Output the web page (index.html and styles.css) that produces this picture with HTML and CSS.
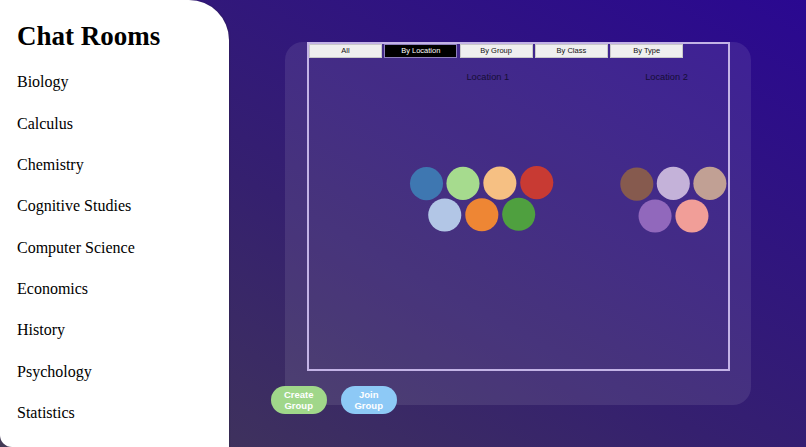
FILE: index.html
```html
<!DOCTYPE html>
<html lang="en">
<head>
<meta charset="utf-8">
<title>Chat Rooms</title>
<link rel="stylesheet" href="styles.css">
</head>
<body>
<div class="app">
  <aside class="sidebar">
    <h1 class="title">Chat Rooms</h1>
    <ul class="rooms">
      <li>Biology</li>
      <li>Calculus</li>
      <li>Chemistry</li>
      <li>Cognitive Studies</li>
      <li>Computer Science</li>
      <li>Economics</li>
      <li>History</li>
      <li>Psychology</li>
      <li>Statistics</li>
    </ul>
  </aside>
  <main class="main">
    <section class="panel">
      <div class="board">
        <div class="tabs">
          <button class="tab">All</button>
          <button class="tab active">By Location</button>
          <button class="tab">By Group</button>
          <button class="tab">By Class</button>
          <button class="tab">By Type</button>
        </div>
        <svg class="chart" width="420" height="312" viewBox="0 0 420 312">
          <text class="loc" x="178.7" y="22.5" text-anchor="middle">Location 1</text>
          <text class="loc" x="358" y="22.5" text-anchor="middle">Location 2</text>
          <g>
            <circle cx="117.2" cy="126" r="16.6" fill="#3e77b1"/>
            <circle cx="153.8" cy="125.8" r="16.6" fill="#a6db8e"/>
            <circle cx="190.8" cy="125.5" r="16.6" fill="#f6c083"/>
            <circle cx="227.8" cy="125" r="16.6" fill="#c83a33"/>
            <circle cx="135.5" cy="157.5" r="16.6" fill="#b2c6e6"/>
            <circle cx="172.7" cy="157.3" r="16.6" fill="#ee8634"/>
            <circle cx="209.7" cy="156.8" r="16.6" fill="#4fa03f"/>
          </g>
          <g>
            <circle cx="328.2" cy="126.5" r="16.6" fill="#865a4e"/>
            <circle cx="364.8" cy="125.8" r="16.6" fill="#c4b2d9"/>
            <circle cx="401.5" cy="125.8" r="16.6" fill="#c1a094"/>
            <circle cx="346.5" cy="158.5" r="16.6" fill="#9168bc"/>
            <circle cx="383.5" cy="158.5" r="16.6" fill="#f19e98"/>
          </g>
        </svg>
      </div>
      <div class="actions">
        <button class="pill create">Create<br>Group</button>
        <button class="pill join">Join<br>Group</button>
      </div>
    </section>
  </main>
</div>
</body>
</html>
```
FILE: styles.css
```css
html, body {
  margin: 0;
  padding: 0;
  height: 100%;
}
body {
  background: linear-gradient(to bottom left, #2a0891 0%, #35206f 55%, #433a55 100%);
  overflow: hidden;
}
.app {
  display: flex;
  height: 447px;
}
.sidebar {
  width: 229px;
  flex: none;
  height: 447px;
  box-sizing: border-box;
  background: #fff;
  border-radius: 0 40px 0 12px;
  padding: 20px 0 0 17px;
  box-shadow: 1px 0 1px rgba(40, 30, 60, 0.35);
  font-family: "Liberation Serif", "Times New Roman", serif;
  color: #000;
}
.title {
  margin: 0 0 8.8px;
  font-size: 27px;
  line-height: 32.4px;
  font-weight: bold;
}
.rooms {
  list-style: none;
  margin: 0;
  padding: 0;
}
.rooms li {
  font-size: 16px;
  line-height: 41.33px;
}
.main {
  flex: 1;
  padding: 42px 0 0 56px;
}
.panel {
  width: 466px;
  height: 363px;
  box-sizing: border-box;
  padding: 0 21px 0 22px;
  border-radius: 18px;
  background: rgba(255, 255, 255, 0.09);
}
.board {
  height: 329px;
  box-sizing: border-box;
  border: 2px solid #c3b3e6;
  display: flex;
  flex-direction: column;
}
.tabs {
  display: flex;
  gap: 2.3px;
  height: 14px;
}
.tab {
  width: 73px;
  height: 14px;
  box-sizing: border-box;
  margin: 0;
  padding: 0;
  border: 0.5px solid #c9c9c9;
  background: #efefef;
  color: #111;
  font-family: "Liberation Sans", Arial, sans-serif;
  font-size: 7.5px;
  line-height: 12px;
}
.tab.active {
  background: #000;
  color: #fff;
  border: 1px solid #8f80bd;
}
.chart {
  display: block;
}
.loc {
  font-family: "Liberation Sans", Arial, sans-serif;
  font-size: 9.3px;
  fill: #160e36;
}
.actions {
  display: flex;
  gap: 14px;
  margin: 14.7px 0 0 -36.3px;
}
.pill {
  width: 56px;
  height: 28px;
  border: none;
  border-radius: 14px;
  padding: 0;
  color: #fff;
  font-family: "Liberation Sans", Arial, sans-serif;
  font-weight: bold;
  font-size: 9.5px;
  line-height: 11px;
}
.create {
  background: #a0d78a;
}
.join {
  background: #8dc9f6;
}
```
